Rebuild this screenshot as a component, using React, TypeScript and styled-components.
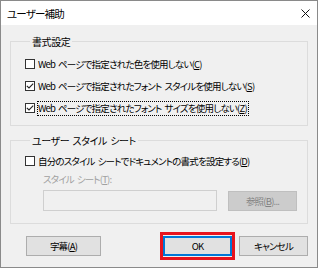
import styled, { createGlobalStyle } from 'styled-components';

const GlobalStyle = createGlobalStyle`
  html, body {
    margin: 0;
    padding: 0;
    background: #fff;
  }
  body {
    font-family: "Noto Sans CJK JP", "Noto Sans", sans-serif;
    font-size: 9.5px;
    letter-spacing: -0.8px;
    word-spacing: 1.5px;
    font-feature-settings: "palt";
    color: #000;
  }
`;

const Window = styled.div`
  box-sizing: border-box;
  width: 318px;
  height: 268px;
  border: 1px solid #8a8a8a;
  display: flex;
  flex-direction: column;
  background: #f0f0f0;
`;

const TitleBar = styled.div`
  height: 24px;
  background: #fff;
  display: flex;
  align-items: center;
  justify-content: space-between;
  padding: 0 7px 0 6px;
`;

const Title = styled.span`
  font-size: 10.5px;
  letter-spacing: -0.8px;
`;

const Client = styled.div`
  display: flex;
  flex-direction: column;
  padding: 10px 9px 0;
`;

const Group = styled.fieldset<{ $top?: number; $bottom: number; $pt: number }>`
  margin: ${({ $top }) => $top ?? 0}px 0 0;
  padding: ${({ $pt }) => $pt}px 0 ${({ $bottom }) => $bottom}px 14px;
  border: 1px solid #dcdcdc;
  min-width: 0;
`;

const Legend = styled.legend`
  margin-left: 5px;
  padding: 0 2px;
  font-size: 10px;
  letter-spacing: -0.4px;
  line-height: 13px;
`;

const CheckRow = styled.label`
  display: flex;
  align-items: center;
  height: 22px;
`;

const Box = styled.span`
  box-sizing: border-box;
  width: 10px;
  height: 10px;
  border: 1px solid #333;
  background: #fff;
  display: flex;
  align-items: center;
  justify-content: center;
`;

const Caption = styled.span<{ $focused?: boolean }>`
  margin-left: 2px;
  padding-right: 1px;
  line-height: 13px;
  white-space: nowrap;
  border: 1px dotted ${({ $focused }) => ($focused ? '#000' : 'transparent')};
`;

const Key = styled.span`
  text-decoration: underline;
`;

const SubLabel = styled.div`
  margin-left: 18px;
  line-height: 14px;
  color: #a0a0a0;
`;

const FileRow = styled.div`
  display: flex;
  align-items: center;
  margin: 4px 0 0 18px;
`;

const PathInput = styled.div`
  box-sizing: border-box;
  width: 174px;
  height: 21px;
  border: 1px solid #cfcfcf;
  background: #f0f0f0;
`;

const Button = styled.button<{ $w: number; $default?: boolean }>`
  box-sizing: border-box;
  width: ${({ $w }) => $w}px;
  height: 20px;
  padding: 0;
  font: inherit;
  letter-spacing: inherit;
  color: #000;
  background: #e1e1e1;
  border: 1px solid ${({ $default }) => ($default ? '#0078d7' : '#adadad')};
  box-shadow: ${({ $default }) => ($default ? 'inset 0 0 0 1px #0078d7' : 'none')};
  &:disabled {
    background: #cccccc;
    border-color: #bfbfbf;
    color: #838383;
  }
`;

const BrowseButton = styled(Button)`
  margin-left: 11px;
`;

const Footer = styled.div`
  display: flex;
  align-items: center;
  margin: 8px 0 0 16px;
`;

const Highlight = styled.div`
  border: 3px solid #e8141e;
  padding: 1px 0;
  margin: 0 4px 0 59px;
  display: flex;
`;

const Check = ({ checked }: { checked?: boolean }) => (
  <Box>
    {checked && (
      <svg width="8" height="8" viewBox="0 0 8 8">
        <path d="M0.8 3.8 L3 6 L7.2 1.6" fill="none" stroke="#222" strokeWidth="1.1" />
      </svg>
    )}
  </Box>
);

const options = [
  { text: 'Web ページで指定された色を使用しない', key: 'C', checked: false },
  { text: 'Web ページで指定されたフォント スタイルを使用しない', key: 'S', checked: true },
  { text: 'Web ページで指定されたフォント サイズを使用しない', key: 'Z', checked: true, focused: true },
];

export default function App() {
  return (
    <>
      <GlobalStyle />
      <Window>
        <TitleBar>
          <Title>ユーザー補助</Title>
          <svg width="9" height="9" viewBox="0 0 9 9">
            <path d="M0.5 0.5 L8.5 8.5 M8.5 0.5 L0.5 8.5" stroke="#111" strokeWidth="1" />
          </svg>
        </TitleBar>
        <Client>
          <Group $pt={5} $bottom={6}>
            <Legend>書式設定</Legend>
            {options.map((o) => (
              <CheckRow key={o.key}>
                <Check checked={o.checked} />
                <Caption $focused={o.focused}>
                  {o.text}(<Key>{o.key}</Key>)
                </Caption>
              </CheckRow>
            ))}
          </Group>
          <Group $top={8} $pt={3} $bottom={12}>
            <Legend>ユーザー スタイル シート</Legend>
            <CheckRow>
              <Check />
              <Caption>
                自分のスタイル シートでドキュメントの書式を設定する(<Key>D</Key>)
              </Caption>
            </CheckRow>
            <SubLabel>
              スタイル シート(<Key>T</Key>):
            </SubLabel>
            <FileRow>
              <PathInput />
              <BrowseButton $w={69} disabled>
                参照(<Key>B</Key>)...
              </BrowseButton>
            </FileRow>
          </Group>
          <Footer>
            <Button $w={75}>
              字幕(<Key>A</Key>)
            </Button>
            <Highlight>
              <Button $w={69} $default>
                OK
              </Button>
            </Highlight>
            <Button $w={69}>キャンセル</Button>
          </Footer>
        </Client>
      </Window>
    </>
  );
}
